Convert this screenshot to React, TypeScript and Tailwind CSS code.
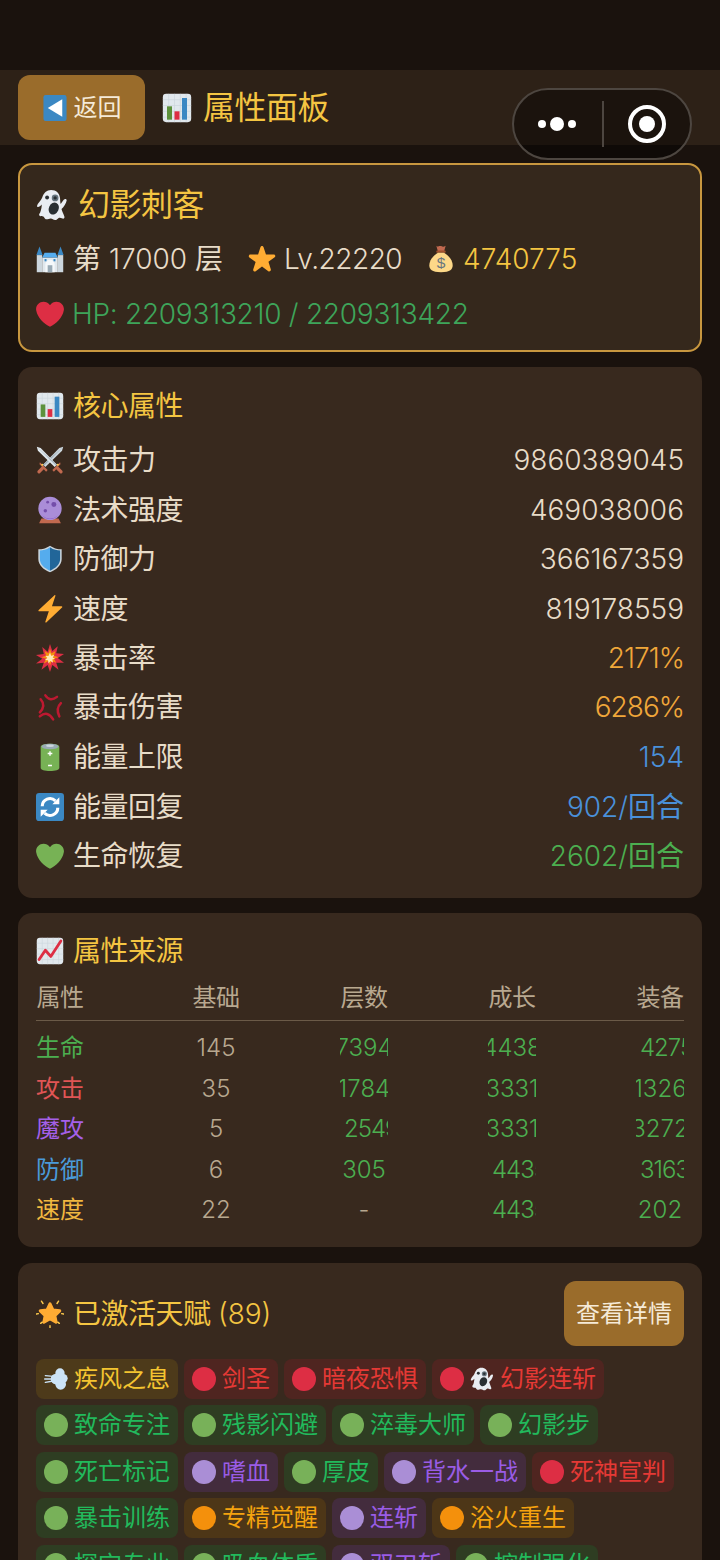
import type { ReactNode } from "react";

type IconProps = { size?: number };

function Icon({ size = 28, children }: IconProps & { children: ReactNode }) {
  return (
    <svg width={size} height={size} viewBox="0 0 36 36" className="shrink-0">
      {children}
    </svg>
  );
}

const Chart = ({ size }: IconProps) => (
  <Icon size={size}>
    <rect x="1" y="1" width="34" height="34" rx="4" fill="#E1E8ED" />
    <path d="M8 1v34M15 1v34M22 1v34M29 1v34M1 8h34M1 15h34M1 22h34M1 29h34" stroke="#CCD6DD" strokeWidth="0.8" />
    <rect x="6" y="16" width="6" height="16" fill="#5C913B" />
    <rect x="15" y="22" width="6" height="10" fill="#DD2E44" />
    <rect x="24" y="6" width="6" height="26" fill="#3B88C3" />
  </Icon>
);

const ChartUp = ({ size }: IconProps) => (
  <Icon size={size}>
    <rect x="1" y="1" width="34" height="34" rx="4" fill="#E1E8ED" />
    <path d="M8 1v34M15 1v34M22 1v34M29 1v34M1 8h34M1 15h34M1 22h34M1 29h34" stroke="#CCD6DD" strokeWidth="0.8" />
    <path d="M4 29l8-12 7 8L32 5" fill="none" stroke="#DD2E44" strokeWidth="3.6" strokeLinejoin="round" strokeLinecap="round" />
  </Icon>
);

const Ghost = ({ size }: IconProps) => (
  <Icon size={size}>
    <path
      d="M17 1c6 0 9.500 4 10 9 .3 3 .2 5 .8 7 1-1.500 2-3.500 3.400-5 1.500-1.500 3.600-.8 3.300 1-.7 3.500-3 7-5.800 9.500.8 3 2.200 5.500 3.200 8.500.6 1.500-.6 2.800-2.200 2.200-1.500-.6-3-1.200-4.200-.6-1.500.8-2 2.400-4 2.400s-3-1.800-5-1.800-3.500 1.400-5.500.8c-1.800-.6-1.500-2.400-2.800-3-1.200-.5-3 .2-4.200-.8-1-.9-.4-2.300.6-3.400C5.500 24.500 6.500 21 6.500 17.500 5 19 3.500 20.500 2 20.300.8 20 1 18.500 2.200 16.500 4.500 13.500 6 12 7 9.500 8.500 4.500 12 1 17 1z"
      fill="#E9EDF2"
    />
    <ellipse cx="20" cy="22" rx="5.500" ry="7" fill="#292F33" transform="rotate(25 20 22)" />
    <circle cx="12.500" cy="9.500" r="2.200" fill="#292F33" />
    <circle cx="21.500" cy="10" r="3.800" fill="#66757F" />
    <circle cx="21.500" cy="10" r="1.900" fill="#292F33" />
  </Icon>
);

const Castle = ({ size }: IconProps) => (
  <Icon size={size}>
    <rect x="1" y="13" width="7" height="22" fill="#CCD6DD" />
    <rect x="28" y="13" width="7" height="22" fill="#CCD6DD" />
    <rect x="8" y="16" width="20" height="19" fill="#E1E8ED" />
    <path d="M4.500 2l4 11h-8zM31.500 2l4 11h-8z" fill="#3B88C3" />
    <path d="M8 16l3-6h14l3 6z" fill="#55ACEE" />
    <path d="M12 35V25a6 6 0 0 1 12 0v10z" fill="#F5F8FA" />
    <rect x="15" y="26" width="6" height="9" fill="#99AAB5" />
    <rect x="11" y="18" width="2.500" height="3" fill="#3B88C3" />
    <rect x="22.500" y="18" width="2.500" height="3" fill="#3B88C3" />
  </Icon>
);

const Star = ({ size }: IconProps) => (
  <Icon size={size}>
    <path
      d="M27.300 34c-.4 0-.8-.1-1.200-.4L18 27.700l-8.100 5.900c-.7.500-1.700.500-2.400 0-.7-.5-1-1.400-.7-2.300l3-9.600-8-5.700c-.7-.5-1-1.400-.7-2.300.3-.8 1-1.400 1.900-1.400l10-.1 3.100-9.500C16.400 1.800 17.200 1.200 18 1.200c.9 0 1.600.6 1.900 1.400l3.200 9.500 10 .1c.9 0 1.600.6 1.900 1.400.3.800 0 1.700-.7 2.300l-8 5.700 3 9.600c.3.800 0 1.700-.7 2.300-.4.300-.8.500-1.300.5z"
      fill="#FFAC33"
    />
  </Icon>
);

const MoneyBag = ({ size }: IconProps) => (
  <Icon size={size}>
    <path d="M12 1c1 1.500 2 1 3 .5s3-.5 4 .2 2.500.8 5-.7l-2 7h-8z" fill="#C1694F" />
    <rect x="12" y="7" width="12" height="3" rx="1" fill="#A0522D" />
    <path d="M14 10C9 13 3 19 3 26c0 5 3 9 15 9s15-4 15-9c0-7-6-13-11-16z" fill="#FDD888" />
    <text x="18" y="30" textAnchor="middle" fontSize="20" fontWeight="400" fill="#67757F" fontFamily="'Liberation Sans', sans-serif">
      $
    </text>
  </Icon>
);

const Heart = ({ size, color = "#DD2E44" }: IconProps & { color?: string }) => (
  <Icon size={size}>
    <path
      d="M35.900 11.700C35.900 6.400 31.600 2.100 26.300 2.100c-3.200 0-6.100 1.600-7.800 4-.2.200-.3.300-.5.300s-.3-.1-.5-.3c-1.700-2.400-4.600-4-7.800-4C4.400 2.100.1 6.400.1 11.700c0 .8.100 1.500.3 2.200C1.700 22.300 10.300 30.800 18 34.500c7.700-3.700 16.300-12.200 17.600-20.600.2-.7.300-1.400.3-2.200z"
      fill={color}
    />
  </Icon>
);

const Swords = ({ size }: IconProps) => (
  <Icon size={size}>
    <path d="M35 1l-5 1.500L9 24l3 3L33.500 6z" fill="#CCD6DD" />
    <path d="M35 1L9 24l1.500 1.500z" fill="#99AAB5" />
    <path d="M1 1l5 1.500L27 24l-3 3L2.500 6z" fill="#E1E8ED" />
    <path d="M1 1l26 23-1.500 1.500z" fill="#AAB8C2" />
    <path d="M5 21l10 10-2 2-3-3-5 5c-1 .8-2.500.2-3-1s-.3-1.500.5-2.500l5-5-3-3z" fill="#C1694F" />
    <path d="M31 21L21 31l2 2 3-3 5 5c1 .8 2.500.2 3-1s.3-1.500-.5-2.500l-5-5 3-3z" fill="#C1694F" />
    <circle cx="8" cy="24" r="1.300" fill="#FFCC4D" />
    <circle cx="28" cy="24" r="1.300" fill="#FFCC4D" />
  </Icon>
);

const CrystalBall = ({ size }: IconProps) => (
  <Icon size={size}>
    <path d="M7 29h22l3 6H4z" fill="#C1694F" />
    <circle cx="18" cy="16" r="15" fill="#AA8DD8" />
    <circle cx="23" cy="11" r="3.200" fill="#744EAA" />
    <circle cx="12" cy="19" r="2.200" fill="#744EAA" />
    <circle cx="15" cy="8" r="1.800" fill="#744EAA" />
    <path d="M8 25a13 13 0 0 0 20 0 15 15 0 0 1-20 0z" fill="#9266CC" />
  </Icon>
);

const Shield = ({ size }: IconProps) => (
  <Icon size={size}>
    <path d="M18 1C12 5 8 5.500 3 5.500V18c0 8 7 14 15 17 8-3 15-9 15-17V5.500C28 5.500 24 5 18 1z" fill="#CCD6DD" />
    <path d="M18 3C13 6.500 9 7 5 7v11c0 7 6 12 13 15z" fill="#55ACEE" />
    <path d="M18 3c5 3.500 9 4 13 4v11c0 7-6 12-13 15z" fill="#226699" />
  </Icon>
);

const Bolt = ({ size }: IconProps) => (
  <Icon size={size}>
    <path d="M32.900 14.500H20.500L25 1c.2-.8-.6-1.300-1.200-.7L3.500 19.400c-.7.700-.3 1.600.6 1.600h12.400L12 34.500c-.2.800.6 1.300 1.200.7l20.300-19.100c.7-.7.300-1.600-.6-1.600z" fill="#FFAC33" />
  </Icon>
);

const Collision = ({ size }: IconProps) => (
  <Icon size={size}>
    <path d="M18 0l3 9 7-6-2 9 10 1-8 5 8 6-10 0 3 9-8-6-3 9-3-9-8 6 3-9-10 1 8-6-8-5 10-1-2-9 7 6z" fill="#DD2E44" />
    <path d="M18 6l2 6 5-3-2 6 6 2-6 2 3 5-6-2-2 6-2-6-6 3 3-6-6-2 6-2-2-6 5 3z" fill="#F4900C" />
    <path d="M18 11l1.500 4 4-1-2 3.500 3 1.500-3.500 1 1 4-3.500-2-2.500 3-.5-4-4-.5 3-2.500-2.500-3 4 .5z" fill="#FFE8B6" />
  </Icon>
);

const Anger = ({ size }: IconProps) => (
  <Icon size={size}>
    <g fill="none" stroke="#BE1931" strokeWidth="3.200" strokeLinecap="round">
      <path d="M12 3Q18 12 27 5" />
      <path d="M6 8Q13 16 5 25" />
      <path d="M32 13Q25 20 30 30" />
      <path d="M5 30Q15 22 22 34" />
    </g>
  </Icon>
);

const Battery = ({ size }: IconProps) => (
  <Icon size={size}>
    <path d="M6 5c0-2.500 5-4 12-4s12 1.500 12 4v27c0 2-5 4-12 4s-12-2-12-4z" fill="#77B255" />
    <ellipse cx="18" cy="4.500" rx="11" ry="3.500" fill="#99AAB5" />
    <ellipse cx="18" cy="3.500" rx="5" ry="1.500" fill="#CCD6DD" />
    <path d="M15 13.500h6M18 10.500v6M15.500 29h5" stroke="#fff" strokeWidth="1.800" />
  </Icon>
);

const Arrows = ({ size }: IconProps) => (
  <Icon size={size}>
    <rect x="0" y="0" width="36" height="36" rx="4" fill="#3B88C3" />
    <path d="M8 17a10 10 0 0 1 17-7" fill="none" stroke="#fff" strokeWidth="4" />
    <path d="M28 19a10 10 0 0 1-17 7" fill="none" stroke="#fff" strokeWidth="4" />
    <path d="M30 5.500v9h-9zM6 30.500v-9h9z" fill="#fff" />
  </Icon>
);

const GlowStar = ({ size }: IconProps) => (
  <Icon size={size}>
    <path d="M18 5l3.800 8 8.700 1-6.400 6 1.700 8.500L18 24l-7.800 4.500 1.700-8.500-6.400-6 8.700-1z" fill="#FFAC33" stroke="#FFAC33" strokeWidth="4" strokeLinejoin="round" />
    <path d="M18 33v2.500M7 1.500l2 3M29 1.500l-2 3M.5 18l2.500-.5M35.500 18l-2.500-.5M6 30l2-1.500M30 30l-2-1.500" stroke="#FFCC4D" strokeWidth="1.800" strokeLinecap="round" />
  </Icon>
);

const Dash = ({ size }: IconProps) => (
  <Icon size={size}>
    <g fill="#CCE4F7">
      <circle cx="24" cy="9" r="7" />
      <circle cx="29" cy="17" r="6.500" />
      <circle cx="25" cy="26" r="8" />
      <circle cx="18" cy="18" r="8" />
    </g>
    <path d="M2 13l12 1M1 18h12M2 23l12-2" stroke="#CCE4F7" strokeWidth="2" strokeLinecap="round" />
  </Icon>
);

const BackArrow = ({ size }: IconProps) => (
  <Icon size={size}>
    <rect x="2" y="0" width="32" height="36" rx="3" fill="#3B88C3" />
    <path d="M8 18L28 6v24z" fill="#fff" />
  </Icon>
);

const stats = [
  { icon: <Swords />, label: "攻击力", value: "9860389045", color: "text-[#e8dcc8]", h: "h-[50px]" },
  { icon: <CrystalBall />, label: "法术强度", value: "469038006", color: "text-[#e8dcc8]", h: "h-[49px]" },
  { icon: <Shield />, label: "防御力", value: "366167359", color: "text-[#e8dcc8]", h: "h-[50px]" },
  { icon: <Bolt />, label: "速度", value: "819178559", color: "text-[#e8dcc8]", h: "h-[49px]" },
  { icon: <Collision />, label: "暴击率", value: "2171%", color: "text-[#f0a73a] tracking-[-1px]", h: "h-[49px]" },
  { icon: <Anger />, label: "暴击伤害", value: "6286%", color: "text-[#f0a73a] tracking-[-1px]", h: "h-[50px]" },
  { icon: <Battery />, label: "能量上限", value: "154", color: "text-[#4a90d9]", h: "h-[50px]" },
  { icon: <Arrows />, label: "能量回复", value: "902/", unit: "回合", color: "text-[#4a90d9]", h: "h-[49px]" },
  { icon: <Heart color="#77B255" />, label: "生命恢复", value: "2602/", unit: "回合", color: "text-[#4caf50]", h: "h-[49px]" },
];

// these cells are cut on the right only, the number starts just inside the cell
const LEFT = "justify-start pl-[4px] tracking-[-1px]";

const sources = [
  { name: "生命", color: "text-[#4caf50]", base: "145", cells: [{ v: "7394" }, { v: "4438" }, { v: "4275", align: LEFT }] },
  { name: "攻击", color: "text-[#e05555]", base: "35", cells: [{ v: "1784" }, { v: "3331" }, { v: "1326" }] },
  { name: "魔攻", color: "text-[#a560e8]", base: "5", cells: [{ v: "2549", align: LEFT }, { v: "3331" }, { v: "3272" }] },
  { name: "防御", color: "text-[#4a9ad9]", base: "6", cells: [{ v: "305" }, { v: "4435", align: LEFT }, { v: "3163", align: LEFT }] },
  { name: "速度", color: "text-[#f0b840]", base: "22", cells: [{ v: "-" }, { v: "4435", align: LEFT }, { v: "202" }] },
];

const tones = {
  gold: { chip: "bg-[#4d3a1a]", text: "text-[#f4c430]", dot: "" },
  red: { chip: "bg-[#4f2520]", text: "text-[#e53935]", dot: "bg-[#dd2e44]" },
  green: { chip: "bg-[#2e3d22]", text: "text-[#22b95c]", dot: "bg-[#78b159]" },
  purple: { chip: "bg-[#432c3d]", text: "text-[#9a5ce6]", dot: "bg-[#aa8ed6]" },
  orange: { chip: "bg-[#4d3617]", text: "text-[#f5a30f]", dot: "bg-[#f4900c]" },
};

type Tone = keyof typeof tones;

const talentRows: { label: string; tone: Tone; dash?: boolean; ghost?: boolean }[][] = [
  [
    { label: "疾风之息", tone: "gold", dash: true },
    { label: "剑圣", tone: "red" },
    { label: "暗夜恐惧", tone: "red" },
    { label: "幻影连斩", tone: "red", ghost: true },
  ],
  [
    { label: "致命专注", tone: "green" },
    { label: "残影闪避", tone: "green" },
    { label: "淬毒大师", tone: "green" },
    { label: "幻影步", tone: "green" },
  ],
  [
    { label: "死亡标记", tone: "green" },
    { label: "嗜血", tone: "purple" },
    { label: "厚皮", tone: "green" },
    { label: "背水一战", tone: "purple" },
    { label: "死神宣判", tone: "red" },
  ],
  [
    { label: "暴击训练", tone: "green" },
    { label: "专精觉醒", tone: "orange" },
    { label: "连斩", tone: "purple" },
    { label: "浴火重生", tone: "orange" },
  ],
  [
    { label: "探宝专业", tone: "green" },
    { label: "吸血体质", tone: "green" },
    { label: "双刃斩", tone: "purple" },
    { label: "控制强化", tone: "green" },
  ],
];

function SectionTitle({ icon, children }: { icon: ReactNode; children: ReactNode }) {
  return (
    <div className="flex items-center gap-[9px] text-[28px] leading-[38px] tracking-[-0.5px] text-[#f4c542]">
      {icon}
      <span>{children}</span>
    </div>
  );
}

function SourceCell({ children, color, align = "justify-center" }: { children: ReactNode; color: string; align?: string }) {
  return (
    <div className={`flex w-12 overflow-hidden whitespace-nowrap ${align} ${color}`}>
      <span className="shrink-0">{children}</span>
    </div>
  );
}

export default function App() {
  return (
    <div
      className="relative flex h-[1560px] w-[720px] flex-col overflow-hidden bg-[#1a120d]"
      style={{ fontFamily: "Inter, 'Noto Sans CJK SC', sans-serif" }}
    >
      <div className="h-[70px] shrink-0" />

      {/* header */}
      <div className="flex h-[75px] shrink-0 items-center bg-[#2d2117] pl-[18px]">
        <button className="flex h-[65px] w-[127px] items-center justify-center gap-[6px] rounded-[12px] bg-[#9a6c2b] text-[24px] text-[#f5ead8]">
          <BackArrow size={26} />
          <span>返回</span>
        </button>
        <div className="ml-[17px] flex items-center gap-[11px] text-[32px] tracking-[-0.5px] text-[#f4c542]">
          <Chart size={30} />
          <span>属性面板</span>
        </div>
      </div>

      {/* wechat capsule */}
      <div className="absolute left-[512px] top-[88px] flex h-[72px] w-[180px] items-center rounded-[36px] border-2 border-[#4d4640] bg-black/40">
        <div className="flex w-[88px] items-center justify-center gap-[4px] pr-[3px]">
          <span className="h-2 w-2 rounded-full bg-white" />
          <span className="h-[14px] w-[14px] rounded-full bg-white" />
          <span className="h-2 w-2 rounded-full bg-white" />
        </div>
        <div className="h-[46px] w-[2px] bg-[#4d4640]" />
        <div className="flex flex-1 items-center justify-center">
          <div className="flex h-[38px] w-[38px] items-center justify-center rounded-full border-[4px] border-white">
            <span className="h-[16px] w-[16px] rounded-full bg-white" />
          </div>
        </div>
      </div>

      <div className="flex flex-col gap-[15px] px-[18px] pt-[18px]">
        {/* hero */}
        <div className="flex h-[189px] flex-col rounded-[14px] border-2 border-[#c8973f] bg-[#35281c] pl-[16px] pt-[15px]">
          <div className="flex h-[50px] items-center gap-[10px] text-[32px] tracking-[-0.5px] text-[#f4c542]">
            <Ghost size={32} />
            <span>幻影刺客</span>
          </div>
          <div className="mt-[4px] flex h-[50px] items-center text-[28px]">
            <Castle size={28} />
            <span className="ml-[9px] text-[#e8dcc8]">
              第 <span className="font-light">17000</span> 层
            </span>
            <span className="ml-[25px]">
              <Star size={28} />
            </span>
            <span className="ml-[8px] font-light tracking-[-0.5px] text-[#e8dcc8]">Lv.22220</span>
            <span className="ml-[25px]">
              <MoneyBag size={28} />
            </span>
            <span className="ml-[8px] font-light text-[#f4c542]">4740775</span>
          </div>
          <div className="mt-[5px] flex h-[50px] items-center gap-[8px] text-[28px] font-light tracking-[-0.27px] text-[#3ea55a]">
            <Heart size={28} />
            <span>HP: 2209313210 / 2209313422</span>
          </div>
        </div>

        {/* core stats */}
        <div className="flex h-[531px] flex-col rounded-[14px] bg-[#38291e] px-[18px] pt-[20px]">
          <SectionTitle icon={<Chart />}>核心属性</SectionTitle>
          <div className="mt-[10px] flex flex-col">
            {stats.map((s) => (
              <div key={s.label} className={`flex items-center justify-between text-[28px] ${s.h}`}>
                <div className="flex items-center gap-[9px] tracking-[-0.5px] text-[#e8dcc8]">
                  {s.icon}
                  <span>{s.label}</span>
                </div>
                <span className={s.color}>
                  <span className="font-light">{s.value}</span>
                  {s.unit}
                </span>
              </div>
            ))}
          </div>
        </div>

        {/* sources */}
        <div className="flex h-[334px] flex-col rounded-[14px] bg-[#38291e] px-[18px] pt-[19px]">
          <SectionTitle icon={<ChartUp />}>属性来源</SectionTitle>
          <div className="mt-[11px] grid grid-cols-[156px_148px_148px_148px_48px] border-b border-[#6b5a48] pb-[5px] text-[24px] leading-[34px] tracking-[-0.5px] text-[#b8a890]">
            <SourceCell color="">属性</SourceCell>
            <SourceCell color="">基础</SourceCell>
            <SourceCell color="">层数</SourceCell>
            <SourceCell color="">成长</SourceCell>
            <SourceCell color="">装备</SourceCell>
          </div>
          <div className="mt-[7px] flex flex-col text-[24px]">
            {sources.map((r) => (
              <div key={r.name} className="grid h-[40.500px] grid-cols-[156px_148px_148px_148px_48px] items-center">
                <SourceCell color={r.color}>{r.name}</SourceCell>
                <SourceCell color="font-light text-[#b8a890]">{r.base}</SourceCell>
                {r.cells.map((c, i) => (
                  <SourceCell key={i} align={c.align} color={c.v === "-" ? "font-light text-[#b8a890]" : "font-light text-[#4caf50]"}>
                    {c.v}
                  </SourceCell>
                ))}
              </div>
            ))}
          </div>
        </div>

        {/* talents */}
        <div className="mt-px flex flex-col rounded-[14px] bg-[#38291e] px-[18px] pb-4 pt-[18px]">
          <div className="flex items-center justify-between">
            <SectionTitle icon={<GlowStar />}>
              已激活天赋 <span className="font-light tracking-normal">(89)</span>
            </SectionTitle>
            <button className="h-[65px] w-[120px] rounded-[12px] bg-[#9a6c2b] text-[24px] text-[#f5ead8]">查看详情</button>
          </div>
          <div className="mt-[13px] flex flex-col gap-[6.400px]">
            {talentRows.map((row, i) => (
              <div key={i} className="flex gap-[6px]">
                {row.map((t) => {
                  const tone = tones[t.tone];
                  return (
                    <div key={t.label} className={`flex h-[40px] items-center gap-[6px] rounded-[8px] px-[8px] text-[24px] ${tone.chip} ${tone.text}`}>
                      {t.dash ? <Dash size={24} /> : <span className={`h-6 w-6 rounded-full ${tone.dot}`} />}
                      {t.ghost && <Ghost size={24} />}
                      <span>{t.label}</span>
                    </div>
                  );
                })}
              </div>
            ))}
          </div>
        </div>
      </div>
    </div>
  );
}
